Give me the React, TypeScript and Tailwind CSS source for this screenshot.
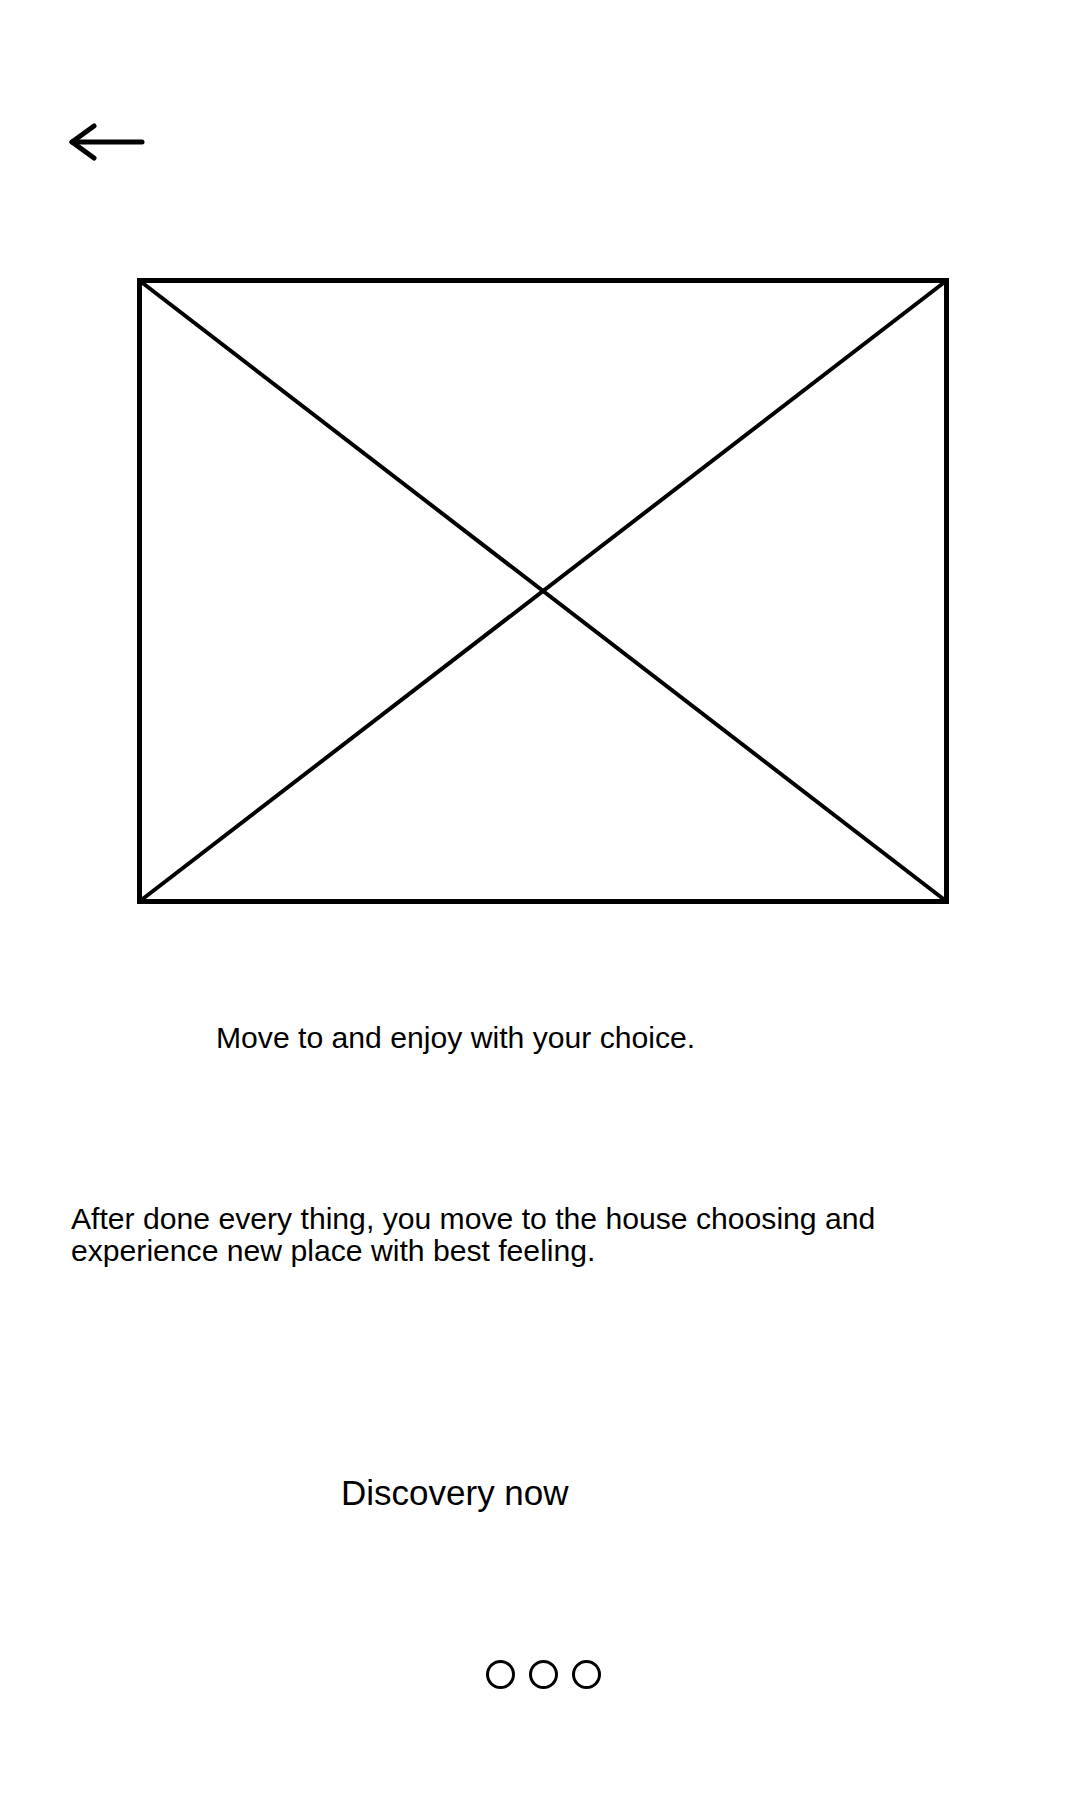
import React from "react";

// Onboarding slide: back arrow, image placeholder, copy, CTA and page dots
function ImagePlaceholder() {
    return (
        <svg width="812" height="626" viewBox="0 0 812 626" className="block">
            <rect x="2.5" y="2.5" width="807" height="621" fill="none" stroke="#000" strokeWidth="5" />
            <line x1="3" y1="3" x2="809" y2="623" stroke="#000" strokeWidth="4" />
            <line x1="809" y1="3" x2="3" y2="623" stroke="#000" strokeWidth="4" />
        </svg>
    );
}

export default function App() {
    return (
        <div
            className="min-h-[1800px] w-[1080px] bg-white text-black flex flex-col"
            style={{ fontFamily: '"Liberation Sans", Arial, sans-serif' }}
        >
            {/* Back */}
            <button className="ml-[68px] mt-[122px] w-[80px] h-[40px] self-start">
                <svg width="80" height="40" viewBox="0 0 80 40" fill="none" stroke="#000" strokeWidth="5" strokeLinecap="round" strokeLinejoin="round">
                    <path d="M4 20 L74 20" />
                    <path d="M26 4 L4 20 L26 36" />
                </svg>
            </button>

            {/* Picture */}
            <div className="ml-[137px] mt-[116px]">
                <ImagePlaceholder />
            </div>

            {/* Title */}
            <p className="ml-[216px] mt-[119px] text-[30.15px] leading-[30px]">
                Move to and enjoy with your choice.
            </p>

            {/* Description */}
            <p className="ml-[71px] mt-[150px] w-[830px] text-[30.15px] leading-[32px]">
                After done every thing, you move to the house choosing and experience new place with best feeling.
            </p>

            {/* CTA */}
            <button className="ml-[341px] mt-[208px] self-start text-[35px] leading-[35px]">
                Discovery now
            </button>

            {/* Pager */}
            <div className="ml-[486px] mt-[150px] flex gap-[14px]">
                <span className="w-[29px] h-[29px] rounded-full border-[3px] border-black" />
                <span className="w-[29px] h-[29px] rounded-full border-[3px] border-black" />
                <span className="w-[29px] h-[29px] rounded-full border-[3px] border-black" />
            </div>
        </div>
    );
}
